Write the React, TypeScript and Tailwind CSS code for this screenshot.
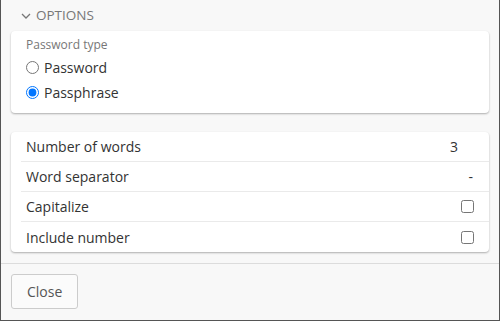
import React from 'react';

const rows = [
  { label: 'Number of words', kind: 'value', value: '3' },
  { label: 'Word separator', kind: 'sep', value: '-' },
  { label: 'Capitalize', kind: 'check' },
  { label: 'Include number', kind: 'check' },
];

const Chevron = () => (
  <svg width="10" height="10" viewBox="0 0 10 10" className="text-[#777]">
    <path d="M1 3 L5 7 L9 3" fill="none" stroke="currentColor" strokeWidth="1.3" />
  </svg>
);

const App = () => {
  return (
    <div className="flex h-[321px] w-[500px] flex-col border-x border-b border-[#555] bg-[#f8f8f8] font-['Open_Sans',sans-serif] text-[#333]">
      <div className="flex-1 px-[10px]">
        <div className="flex h-[31px] items-center gap-[5px] pl-[10px] text-[13.5px] uppercase text-[#777]">
          <Chevron />
          <span>Options</span>
        </div>

        <div className="h-[82px] rounded-[4px] bg-white px-[15px] pt-[6px] shadow-[0_1px_2px_rgba(0,0,0,0.3)]">
          <p className="text-[12px] leading-[16px] text-[#777]">Password type</p>
          <div className="mt-[2px]">
            <label className="flex h-[25px] items-center gap-[5px] text-[14px]">
              <input type="radio" name="ptype" className="m-0 h-[13px] w-[13px]" />
              Password
            </label>
            <label className="flex h-[25px] items-center gap-[5px] text-[14px]">
              <input type="radio" name="ptype" defaultChecked className="m-0 h-[13px] w-[13px]" />
              Passphrase
            </label>
          </div>
        </div>

        <div className="mt-[19px] rounded-[4px] bg-white pl-[10px] shadow-[0_1px_2px_rgba(0,0,0,0.3)]">
          {rows.map((r, i) => (
            <div
              key={r.label}
              className={`flex h-[30px] items-center justify-between pl-[5px] pr-[15px] text-[14px] ${
                i < rows.length - 1 ? 'border-b border-[#eaeaea]' : ''
              }`}
            >
              <span>{r.label}</span>
              {r.kind === 'value' && <span className="mr-[16px]">{r.value}</span>}
              {r.kind === 'sep' && <span className="mr-[1px]">{r.value}</span>}
              {r.kind === 'check' && <input type="checkbox" className="m-0 h-[13px] w-[13px]" />}
            </div>
          ))}
        </div>
      </div>

      <div className="h-[57px] border-t border-[#dcdcdc] bg-[#f8f8f8] px-[10px] pt-[10px]">
        <button
          type="button"
          className="h-[35px] rounded-[3px] border border-[#ccc] bg-[#fbfbfb] px-[15px] text-[14px] text-[#555]"
        >
          Close
        </button>
      </div>
    </div>
  );
};

export default App;
